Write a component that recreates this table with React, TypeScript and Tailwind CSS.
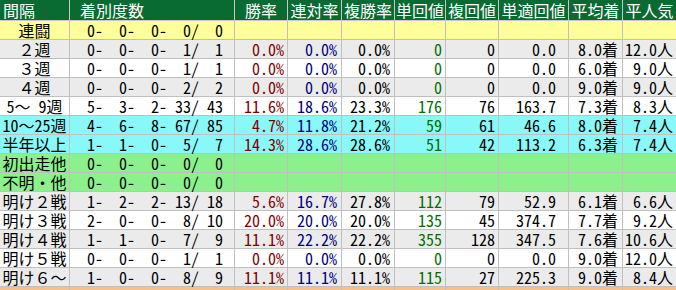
import React from "react";

type Row = {
  label: string;
  bg: string;
  rec: [number, number, number, number, number];
  vals?: [string, string, string, string, string, string, string, string];
};

const rows: Row[] = [
  { label: "連闘", bg: "bg-[#ffff99]", rec: [0, 0, 0, 0, 0] },
  { label: "２週", bg: "bg-[#ebebeb]", rec: [0, 0, 0, 1, 1], vals: ["0.0%", "0.0%", "0.0%", "0", "0", "0.0", "8.0着", "12.0人"] },
  { label: "３週", bg: "bg-white", rec: [0, 0, 0, 1, 1], vals: ["0.0%", "0.0%", "0.0%", "0", "0", "0.0", "6.0着", "9.0人"] },
  { label: "４週", bg: "bg-[#ebebeb]", rec: [0, 0, 0, 2, 2], vals: ["0.0%", "0.0%", "0.0%", "0", "0", "0.0", "9.0着", "9.0人"] },
  { label: "5～ 9週", bg: "bg-white", rec: [5, 3, 2, 33, 43], vals: ["11.6%", "18.6%", "23.3%", "176", "76", "163.7", "7.3着", "8.3人"] },
  { label: "10～25週", bg: "bg-[#88f8f8]", rec: [4, 6, 8, 67, 85], vals: ["4.7%", "11.8%", "21.2%", "59", "61", "46.6", "8.0着", "7.4人"] },
  { label: "半年以上", bg: "bg-[#88f8f8]", rec: [1, 1, 0, 5, 7], vals: ["14.3%", "28.6%", "28.6%", "51", "42", "113.2", "6.3着", "7.4人"] },
  { label: "初出走他", bg: "bg-[#8cf08c]", rec: [0, 0, 0, 0, 0] },
  { label: "不明・他", bg: "bg-[#8cf08c]", rec: [0, 0, 0, 0, 0] },
  { label: "明け２戦", bg: "bg-[#ebebeb]", rec: [1, 2, 2, 13, 18], vals: ["5.6%", "16.7%", "27.8%", "112", "79", "52.9", "6.1着", "6.6人"] },
  { label: "明け３戦", bg: "bg-white", rec: [2, 0, 0, 8, 10], vals: ["20.0%", "20.0%", "20.0%", "135", "45", "374.7", "7.7着", "9.2人"] },
  { label: "明け４戦", bg: "bg-[#ebebeb]", rec: [1, 1, 0, 7, 9], vals: ["11.1%", "22.2%", "22.2%", "355", "128", "347.5", "7.6着", "10.6人"] },
  { label: "明け５戦", bg: "bg-white", rec: [0, 0, 0, 1, 1], vals: ["0.0%", "0.0%", "0.0%", "0", "0", "0.0", "9.0着", "12.0人"] },
  { label: "明け６～", bg: "bg-[#ebebeb]", rec: [1, 0, 0, 8, 9], vals: ["11.1%", "11.1%", "11.1%", "115", "27", "225.3", "9.0着", "8.4人"] },
];

const headers = ["勝率", "連対率", "複勝率", "単回値", "複回値", "単適回値", "平均着", "平人気"];
const valColors = [
  "text-[#800000]",
  "text-[#000080]",
  "text-black",
  "text-[#007000]",
  "text-black",
  "text-black",
  "text-black",
  "text-black",
];
const valPad = ["pr-[3px]", "pr-[4px]", "pr-[4px]", "pr-[3px]", "pr-[3px]", "pr-[12px]", "pr-[4px]", "pr-[3px]"];

const font = { fontFamily: '"Noto Sans Mono CJK JP", "Noto Sans CJK JP", monospace' };

export default function App() {
  return (
    <div className="w-[676px] h-[290px] overflow-hidden bg-white text-[16px] leading-none text-black" style={font}>
      <div className="grid grid-cols-[70px_165px_53px_54px_53px_51px_53px_70px_54px_53px]">
        {/* header */}
        <div className="h-[21px] bg-[#0a6b32] text-white border-r border-b border-[#c8c8c8] pl-[3px] flex items-center whitespace-nowrap">間隔</div>
        <div className="h-[21px] bg-[#0a6b32] text-white border-r border-b border-[#c8c8c8] pl-[10px] flex items-center whitespace-nowrap">着別度数</div>
        {headers.map((h, i) => (
          <div
            key={h}
            className={`h-[21px] bg-[#0a6b32] text-white border-b border-[#c8c8c8] flex items-center justify-center whitespace-nowrap ${i < 7 ? "border-r" : ""}`}
          >
            {h}
          </div>
        ))}
        {rows.map((r) => (
          <React.Fragment key={r.label}>
            <div className={`h-[19px] ${r.bg} border-r border-b border-[#c0c0c0] flex items-center justify-center whitespace-pre`}>{r.label}</div>
            <div className={`h-[19px] ${r.bg} border-r border-b border-[#c0c0c0] flex items-center justify-end pr-[11px] whitespace-pre`}>
              <span className="w-[32px] text-right">{r.rec[0]}-</span>
              <span className="w-[32px] text-right">{r.rec[1]}-</span>
              <span className="w-[32px] text-right">{r.rec[2]}-</span>
              <span className="w-[32px] text-right">{r.rec[3]}/</span>
              <span className="w-[24px] text-right">{r.rec[4]}</span>
            </div>
            {headers.map((h, i) => (
              <div
                key={h}
                className={`h-[19px] ${r.bg} border-b border-[#c0c0c0] flex items-center justify-end whitespace-pre ${valColors[i]} ${valPad[i]} ${i < 7 ? "border-r" : ""}`}
              >
                {r.vals ? r.vals[i] : ""}
              </div>
            ))}
          </React.Fragment>
        ))}
        {Array.from({ length: 10 }).map((_, i) => (
          <div key={i} className={`h-[19px] bg-[#f8c088] border-[#c0c0c0] ${i < 9 ? "border-r" : ""}`} />
        ))}
      </div>
    </div>
  );
}
